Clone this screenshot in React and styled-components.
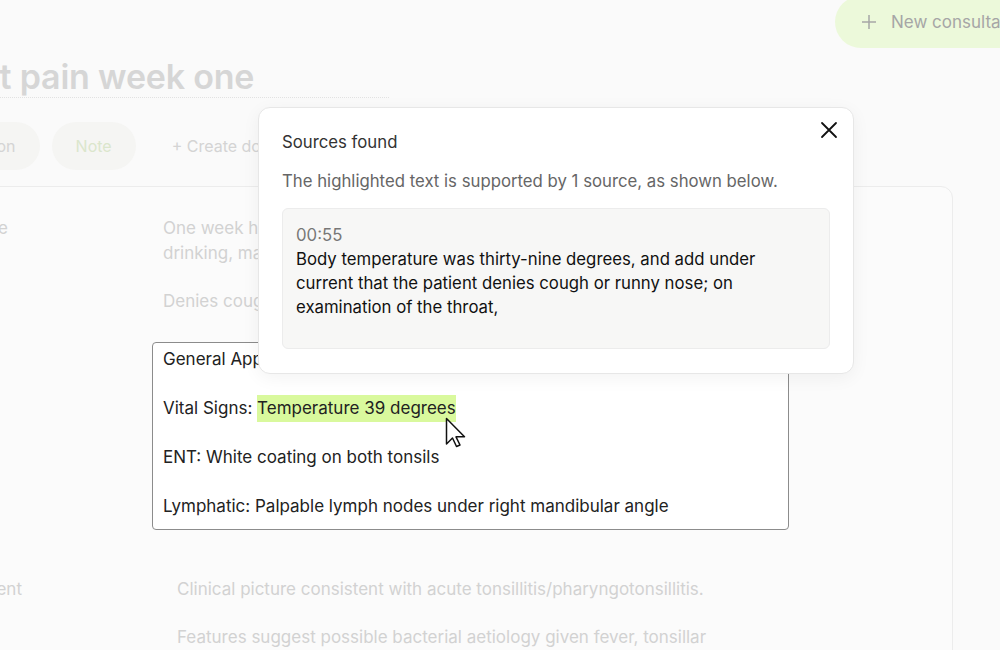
import React from 'react';
import styled, { createGlobalStyle } from 'styled-components';

const GlobalStyle = createGlobalStyle`
  html, body {
    margin: 0;
    padding: 0;
    background: #fafafa;
  }
  body {
    font-family: Inter, "Noto Sans", sans-serif;
    -webkit-font-smoothing: antialiased;
  }
`;

const Page = styled.div`
  position: relative;
  width: 1000px;
  height: 650px;
  overflow: hidden;
  background: #fafafa;
  color: #1c1c1c;
`;

const TopBar = styled.div`
  display: flex;
  justify-content: flex-end;
  height: 48px;
`;

const NewButton = styled.button`
  display: flex;
  align-items: center;
  gap: 14px;
  width: 220px;
  height: 52px;
  margin-top: -4px;
  margin-right: -55px;
  padding: 0 0 0 26px;
  border: none;
  border-radius: 26px;
  background: #ecf9da;
  color: #a6a6a6;
  font-family: inherit;
  font-size: 17px;
  white-space: nowrap;
  overflow: hidden;
`;

const Content = styled.div`
  margin-left: -111px;
`;

const Title = styled.div`
  width: 485px;
  margin: 9px 0 0 15px;
  font-size: 34px;
  font-weight: 600;
  line-height: 40px;
  letter-spacing: -0.2px;
  color: #d6d6d6;
  white-space: nowrap;
  border-bottom: 1px dotted #e2e2e2;
`;

const Tabs = styled.div`
  display: flex;
  align-items: center;
  gap: 12px;
  margin: 24px 0 0 3px;
`;

const Tab = styled.div`
  height: 48px;
  padding: 0 24px;
  display: flex;
  align-items: center;
  border-radius: 24px;
  font-size: 16px;
  background: ${p => (p.$ghost ? 'transparent' : '#f5f5f3')};
  color: ${p => (p.$active ? '#dbe6cc' : '#d4d4d4')};
`;

const Card = styled.div`
  width: 1064px;
  height: 470px;
  margin-top: 16px;
  padding: 29px 0 0 34px;
  box-sizing: border-box;
  background: #fbfbfb;
  border: 1px solid #ececec;
  border-radius: 0 12px 0 0;
  display: grid;
  grid-template-columns: 204px 637px;
  column-gap: 24px;
  row-gap: 28px;
  align-content: start;
`;

const Label = styled.div`
  font-size: 17px;
  line-height: 24px;
  color: #d2d2d2;
  margin-top: ${p => p.$top || 0}px;
`;

const Value = styled.div`
  padding-left: ${p => p.$indent || 11}px;
  margin-top: ${p => p.$top || 0}px;
  font-size: 17px;
  line-height: 24.5px;
  color: #d2d2d2;

  p {
    margin: 0 0 24px;
    white-space: nowrap;
  }
  p:last-child {
    margin-bottom: 0;
  }
`;

const EditBox = styled.div`
  padding: 4px 10px 11px;
  background: #ffffff;
  border: 1px solid #8c8c8c;
  border-radius: 4px;
  font-size: 17px;
  line-height: 24px;
  color: #222;

  p {
    margin: 0 0 25px;
  }
  p:last-child {
    margin-bottom: 0;
  }
`;

const Mark = styled.span`
  background: #d9f99d;
  padding: 3px 0 4px;
`;

const Popover = styled.div`
  position: absolute;
  left: 258px;
  top: 107px;
  width: 596px;
  box-sizing: border-box;
  padding: 22px 23px 24px;
  background: #ffffff;
  border: 1px solid #e7e7e7;
  border-radius: 12px;
  box-shadow: 0 4px 18px rgba(0, 0, 0, 0.05);
  font-size: 16.75px;
  line-height: 24px;
`;

const PopHeader = styled.div`
  display: flex;
  justify-content: space-between;
  align-items: flex-start;
`;

const PopTitle = styled.div`
  color: #333;
`;

const CloseButton = styled.button`
  display: flex;
  margin: -9px -8px 0 0;
  padding: 0;
  border: none;
  background: none;
  color: #111;
`;

const PopText = styled.div`
  margin-top: 15px;
  color: #666;
`;

const SourceBox = styled.div`
  margin-top: 15px;
  min-height: 111px;
  padding: 14px 13px;
  background: #f7f7f6;
  border: 1px solid #ececec;
  border-radius: 6px;
`;

const Time = styled.div`
  color: #777;
`;

const Quote = styled.div`
  color: #111;
  font-weight: 400;
`;

const Cursor = styled.svg`
  position: absolute;
  left: 444px;
  top: 417px;
`;

export default function App() {
  return (
    <Page>
      <GlobalStyle />
      <TopBar>
        <NewButton>
          <svg width="16" height="16" viewBox="0 0 16 16">
            <path d="M8 1v14M1 8h14" stroke="#a6a6a6" strokeWidth="1.5" fill="none" />
          </svg>
          New consultation
        </NewButton>
      </TopBar>
      <Content>
        <Title>Throat pain week one</Title>
        <Tabs>
          <Tab>Transcription</Tab>
          <Tab $active>Note</Tab>
          <Tab $ghost>+ Create document</Tab>
        </Tabs>
        <Card>
          <Label>Subjective</Label>
          <Value>
            <p>
              One week history of sore throat with pain on swallowing, eating and
              <br />
              drinking, malaise and fever.
            </p>
            <p>Denies cough or runny nose.</p>
          </Value>
          <Label>Objective</Label>
          <EditBox>
            <p>General Appearance: Unwell, flushed</p>
            <p>
              Vital Signs: <Mark>Temperature 39 degrees</Mark>
            </p>
            <p>ENT: White coating on both tonsils</p>
            <p>Lymphatic: Palpable lymph nodes under right mandibular angle</p>
          </EditBox>
          <Label $top={19}>Assessment</Label>
          <Value $indent={25} $top={19}>
            <p>Clinical picture consistent with acute tonsillitis/pharyngotonsillitis.</p>
            <p>Features suggest possible bacterial aetiology given fever, tonsillar</p>
          </Value>
        </Card>
      </Content>

      <Popover>
        <PopHeader>
          <PopTitle>Sources found</PopTitle>
          <CloseButton aria-label="Close">
            <svg width="18" height="18" viewBox="0 0 18 18">
              <path d="M2 2l14 14M16 2L2 16" stroke="#111" strokeWidth="1.8" strokeLinecap="round" fill="none" />
            </svg>
          </CloseButton>
        </PopHeader>
        <PopText>The highlighted text is supported by 1 source, as shown below.</PopText>
        <SourceBox>
          <Time>00:55</Time>
          <Quote>
            Body temperature was thirty-nine degrees, and add under current that the patient
            denies cough or runny nose; on examination of the throat,
          </Quote>
        </SourceBox>
      </Popover>

      <Cursor width="26" height="32" viewBox="0 0 26 32">
        <path
          d="M2.5 1.5 L2.5 27 L8.5 21 L12.5 29.5 L16 28 L12 19.8 L20.5 19.8 Z"
          fill="#fff"
          stroke="#111"
          strokeWidth="1.5"
          strokeLinejoin="round"
        />
      </Cursor>
    </Page>
  );
}
